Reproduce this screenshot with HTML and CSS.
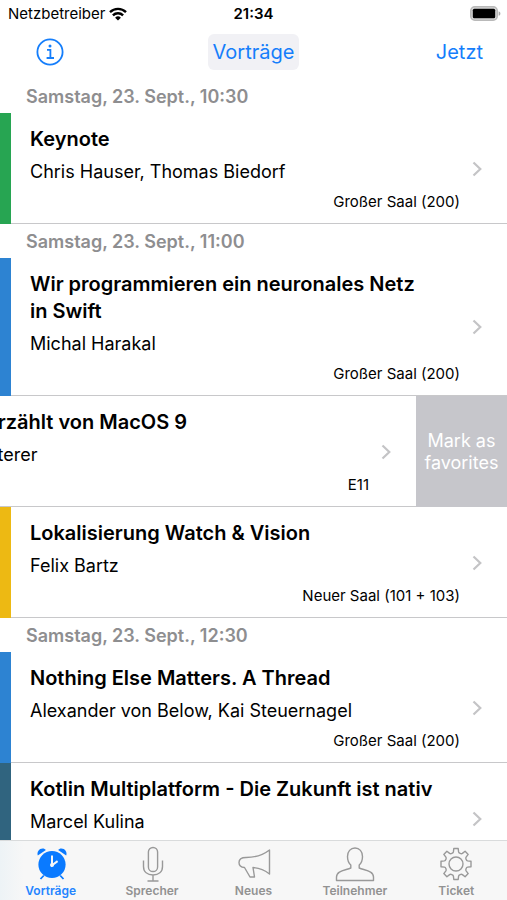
FILE: index.html
```html
<!DOCTYPE html>
<html lang="de">
<head>
<meta charset="utf-8">
<meta name="viewport" content="width=device-width, initial-scale=1">
<title>Vorträge</title>
<link rel="stylesheet" href="styles.css">
</head>
<body>
<svg class="defs" width="0" height="0" aria-hidden="true">
  <symbol id="chevron" viewBox="0 0 10 16"><path d="M1.5 1.5 8.3 8 1.5 14.5" fill="none" stroke="#c4c4c6" stroke-width="2.2"/></symbol>
</svg>
<div class="app">
  <div class="status">
    <span class="carrier">Netzbetreiber
      <svg width="18" height="14" viewBox="0 0 18 14" aria-hidden="true"><g fill="none" stroke="#000" stroke-width="2.4"><path d="M1 5.2a11.4 11.4 0 0 1 16 0"/><path d="M3.9 8.3a7.3 7.3 0 0 1 10.2 0"/></g><path d="M9 13.6 6.1 10.7a4.1 4.1 0 0 1 5.8 0z"/></svg>
    </span>
    <span class="time">21:34</span>
    <span class="battery"><svg width="31" height="15" viewBox="0 0 31 15" aria-hidden="true"><rect x=".8" y=".8" width="26.4" height="13.4" rx="4" fill="#d8d8d8" stroke="#b9b9b9" stroke-width="1.6"/><rect x="2.8" y="2.8" width="22.4" height="9.4" rx="1.500" fill="#000"/><path d="M28.6 5.2c2.400.8 2.400 3.800 0 4.600z" fill="#aaa"/></svg></span>
  </div>
  <header class="nav">
    <button class="info" type="button" aria-label="Info"><svg width="28" height="28" viewBox="0 0 28 28" aria-hidden="true"><g fill="none" stroke="#157efb" stroke-width="1.8"><circle cx="14" cy="14" r="12.6"/><path d="M11 11.800h3.400v8M10.600 20h7.400"/></g><circle cx="14" cy="8" r="1.500" fill="#157efb"/></svg></button>
    <button class="filter" type="button">Vorträge</button>
    <button class="now" type="button">Jetzt</button>
  </header>
  <main class="list">
    <h2 class="slot">Samstag, 23. Sept., 10:30</h2>
    <article class="talk green">
      <div class="body">
        <div class="text"><h3>Keynote</h3><p class="speaker">Chris Hauser, Thomas Biedorf</p><p class="room">Großer Saal (200)</p></div>
        <svg class="chevron" aria-hidden="true"><use href="#chevron"/></svg>
      </div>
    </article>
    <h2 class="slot">Samstag, 23. Sept., 11:00</h2>
    <article class="talk blue">
      <div class="body">
        <div class="text"><h3>Wir programmieren ein neuronales Netz in Swift</h3><p class="speaker">Michal Harakal</p><p class="room">Großer Saal (200)</p></div>
        <svg class="chevron" aria-hidden="true"><use href="#chevron"/></svg>
      </div>
    </article>
    <article class="talk swiped">
      <div class="body">
        <div class="text"><h3>erzählt von MacOS 9</h3><p class="speaker">tterer</p><p class="room">E11</p></div>
        <svg class="chevron" aria-hidden="true"><use href="#chevron"/></svg>
      </div>
      <button class="favorite" type="button">Mark as favorites</button>
    </article>
    <article class="talk yellow">
      <div class="body">
        <div class="text"><h3>Lokalisierung Watch &amp; Vision</h3><p class="speaker">Felix Bartz</p><p class="room">Neuer Saal (101 + 103)</p></div>
        <svg class="chevron" aria-hidden="true"><use href="#chevron"/></svg>
      </div>
    </article>
    <h2 class="slot">Samstag, 23. Sept., 12:30</h2>
    <article class="talk blue">
      <div class="body">
        <div class="text"><h3>Nothing Else Matters. A Thread</h3><p class="speaker">Alexander von Below, Kai Steuernagel</p><p class="room">Großer Saal (200)</p></div>
        <svg class="chevron" aria-hidden="true"><use href="#chevron"/></svg>
      </div>
    </article>
    <article class="talk teal">
      <div class="body">
        <div class="text"><h3>Kotlin Multiplatform - Die Zukunft ist nativ</h3><p class="speaker">Marcel Kulina</p><p class="room">&nbsp;</p></div>
        <svg class="chevron" aria-hidden="true"><use href="#chevron"/></svg>
      </div>
    </article>
  </main>
  <nav class="tabs">
    <a class="tab active" href="#vortraege"><svg viewBox="0 0 36 36" aria-hidden="true"><g fill="#0a7aff"><circle cx="19" cy="18.500" r="13.600"/><path d="M4.800 9.500C3.500 6 6.200 2.500 9.700 2.500c1.300 0 2.400.6 3.200 1.500z"/><path d="M33.200 9.500c1.300-3.500-1.400-7-4.900-7-1.300 0-2.400.6-3.200 1.500z"/></g><path d="m10.800 29.500-3.300 3.500M27.200 29.500l3.300 3.500" stroke="#0a7aff" stroke-width="1.800"/><path d="M19 9.500v9.800l5.600-4.200" fill="none" stroke="#f8f8f8" stroke-width="2"/><circle cx="19" cy="19" r="2" fill="#f8f8f8"/></svg><span>Vorträge</span></a>
    <a class="tab" href="#sprecher"><svg viewBox="0 0 36 36" aria-hidden="true"><g class="line"><rect x="14.400" y="1.500" width="9.200" height="24" rx="4.600"/><path d="M9.500 14.500v6c0 5.500 4 8.500 9.500 8.500s9.500-3 9.500-8.500v-6M19 29v6M13.500 35h11"/></g></svg><span>Sprecher</span></a>
    <a class="tab" href="#neues"><svg viewBox="0 0 36 36" aria-hidden="true"><g class="line"><path d="M34.500 4C28 9 20 11.500 11 11.500c-4.500 0-7 2-7 5s2.500 4.800 5.500 5L15 31h4.500L18 21.500c6.500.5 11.500 2.500 16.500 6.500z"/></g></svg><span>Neues</span></a>
    <a class="tab" href="#teilnehmer"><svg class="wide" viewBox="0 0 40 36" aria-hidden="true"><g class="line"><path d="M15.800 22v-3C13.500 17 12.500 14 12.500 10.500c0-5 3-8.500 7.500-8.500s7.500 3.500 7.500 8.500c0 3.500-1 6.500-3.300 8.500v3C31 24.500 38.500 25 38.500 31v3.500h-37V31C1.500 25 9 24.500 15.800 22z"/></g></svg><span>Teilnehmer</span></a>
    <a class="tab" href="#ticket"><svg viewBox="0 0 36 36" aria-hidden="true"><g class="line"><circle cx="18" cy="18" r="7"/><path d="M15.400 5.900 15.800 2.500h4.400l.4 3.400c.2 1.300 2.700 2.300 3.800 1.500l2.700-2.100 3.100 3.100-2.100 2.700c-.8 1.100.2 3.600 1.500 3.800l3.400.4v5.400l-3.400.4c-1.300.2-2.300 2.700-1.500 3.800l2.100 2.700-3.100 3.100-2.700-2.100c-1.100-.8-3.600.2-3.800 1.500l-.4 3.400h-4.400l-.4-3.400c-.2-1.300-2.700-2.300-3.800-1.500l-2.700 2.100-3.100-3.100 2.100-2.700c.8-1.100-.2-3.600-1.500-3.800L3 20.700v-5.400l3.400-.4c1.300-.2 2.300-2.700 1.500-3.800L5.800 8.400l3.100-3.100 2.700 2.100c1.100.8 3.600-.2 3.800-1.500z"/></g></svg><span>Ticket</span></a>
  </nav>
</div>
</body>
</html>
```
FILE: styles.css
```css
* { box-sizing: border-box; }
body { margin: 0; background: #fff; color: #000; font-family: Inter, "Liberation Sans", sans-serif; }
h2, h3, p { margin: 0; }
button { border: 0; padding: 0; background: none; font: inherit; cursor: pointer; }
svg { display: block; flex: none; }
.defs { position: absolute; }
.app { display: flex; flex-direction: column; height: 100vh; overflow: hidden; }
.status { display: grid; grid-template-columns: 1fr auto 1fr; align-items: center; height: 27px; padding: 0 6px; font-size: 15px; flex: none; }
.carrier { display: flex; align-items: center; gap: 4px; padding-left: 2px; }
.time { font-weight: 600; }
.battery { justify-self: end; }
.nav { display: grid; grid-template-columns: 1fr auto 1fr; align-items: center; height: 52px; padding: 0 24px 2px; font-size: 20px; flex: none; }
.nav button { color: #157efb; }
.info { justify-self: start; margin-left: 12px; }
.nav .filter { height: 36px; padding: 0 5px; border-radius: 6px; background: #f1f1f5; }
.now { justify-self: end; }
.list { flex: 1; min-height: 0; overflow: hidden; }
.slot { height: 34px; padding-left: 26px; font-size: 18px; line-height: 35px; font-weight: 600; color: #8e8e90; }
.talk { display: flex; }
.talk::before { content: ""; width: 11px; flex: none; background: var(--track); }
.green { --track: #27a552; }
.blue { --track: #2d83d2; }
.yellow { --track: #edb913; }
.teal { --track: #30647f; }
.body { display: flex; align-items: center; flex: 1; min-width: 0; padding: 13px 25px 12px 19px; border-bottom: 1px solid #c8c8ca; }
.text { flex: 1; min-width: 0; }
h3 { padding-right: 24px; font-size: 20px; line-height: 27px; font-weight: 600; }
.speaker { margin-top: 7px; font-size: 18px; line-height: 24px; }
.room { margin-top: 9px; font-size: 15px; line-height: 18px; text-align: right; }
.chevron { width: 10px; height: 16px; margin-left: 12px; }
.swiped::before { display: none; }
.swiped .body { padding-left: 0; }
.swiped h3 { margin-left: -14px; }
.swiped .speaker { margin-left: -8px; }
.favorite { width: 91px; flex: none; background: #c6c6cb; color: #fff; font-size: 18px; line-height: 22px; }
.tabs { display: grid; grid-template-columns: repeat(5, 1fr); flex: none; height: 60px; padding-top: 5px; border-top: 1px solid #d9dbdc; background: linear-gradient(90deg, #edf3f6, #f7f7f7 24px); }
.tab { display: flex; flex-direction: column; align-items: center; gap: 1px; color: #929292; font-size: 12px; line-height: 16px; font-weight: 600; text-decoration: none; }
.tab svg { width: 36px; height: 36px; }
.tab .wide { width: 40px; }
.active { color: #2585ff; }
.line { fill: none; stroke: #999; stroke-width: 1.4; stroke-linejoin: round; }
```
